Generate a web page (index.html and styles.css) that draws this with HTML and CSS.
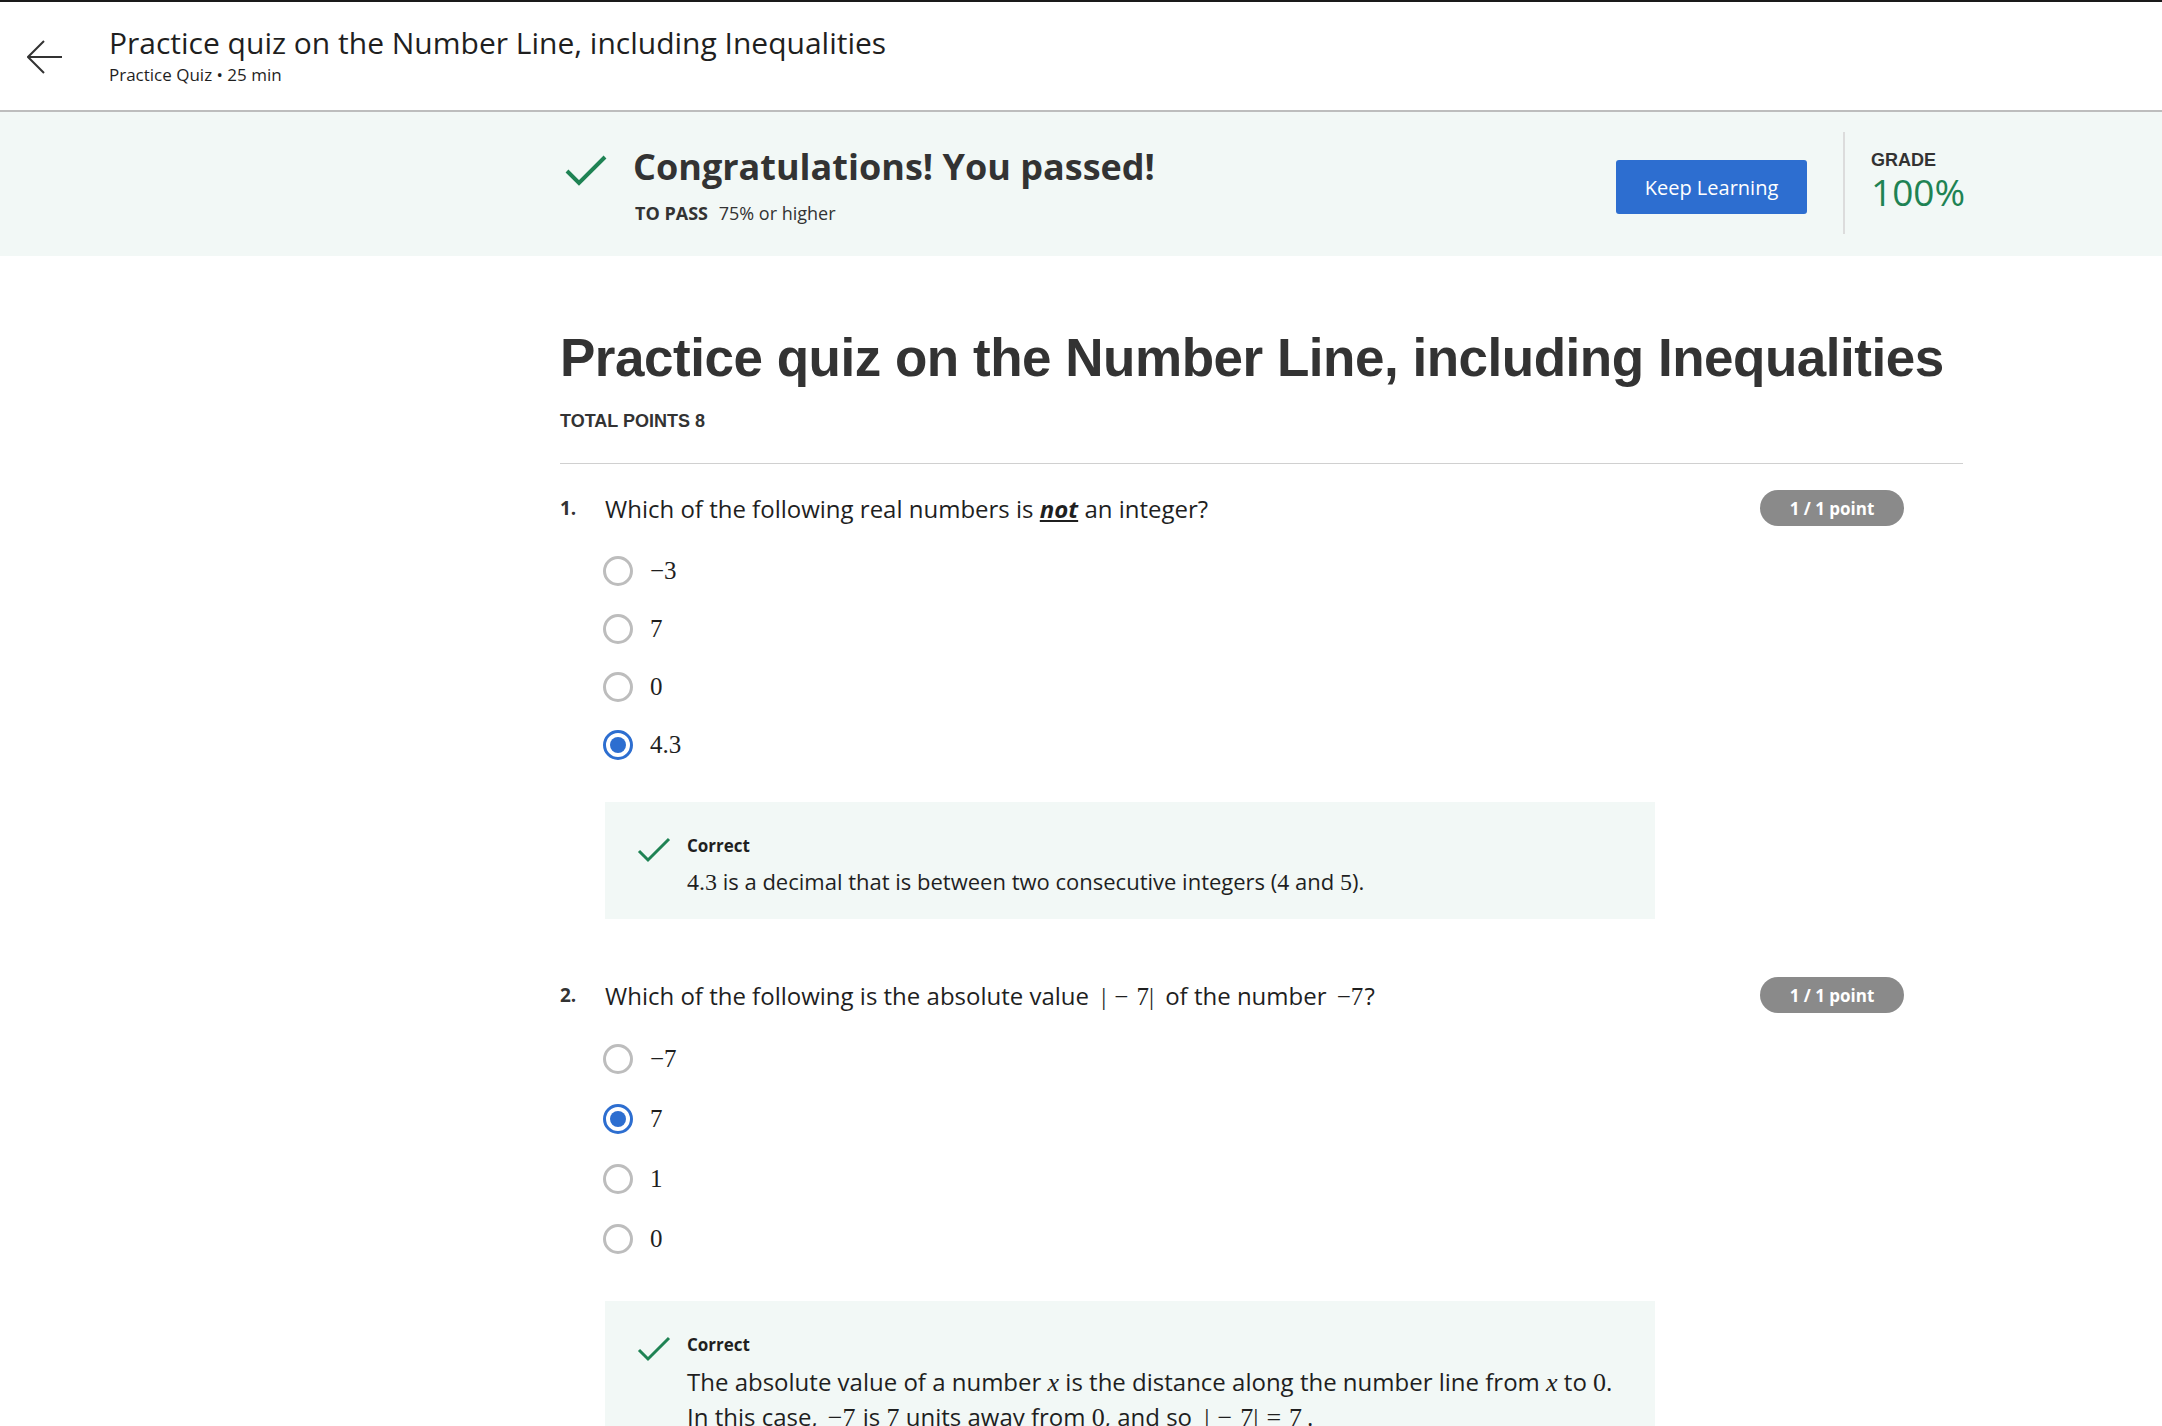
FILE: index.html
```html
<!DOCTYPE html>
<html lang="en">
<head>
<meta charset="utf-8">
<title>Practice quiz on the Number Line, including Inequalities</title>
<link rel="stylesheet" href="styles.css">
</head>
<body>
<header class="topbar">
  <div class="back">
    <svg width="36" height="34" viewBox="0 0 36 34"><path d="M35 17H2M17 1L1 17L17 33" fill="none" stroke="#333" stroke-width="2"/></svg>
  </div>
  <div class="top-titles">
    <div class="top-title">Practice quiz on the Number Line, including Inequalities</div>
    <div class="top-sub">Practice Quiz • 25 min</div>
  </div>
</header>

<section class="banner">
  <div class="banner-inner">
    <div class="pass-check">
      <svg width="42" height="32" viewBox="0 0 42 32"><path d="M2 16L14 28L40 2" fill="none" stroke="#1f8354" stroke-width="4"/></svg>
    </div>
    <div class="pass-text">
      <div class="pass-title">Congratulations! You passed!</div>
      <div class="pass-sub"><b>TO PASS</b> 75% or higher</div>
    </div>
    <button class="keep">Keep Learning</button>
    <div class="sep"></div>
    <div class="grade">
      <div class="grade-label">GRADE</div>
      <div class="grade-val">100%</div>
    </div>
  </div>
</section>

<main class="content">
  <h1 class="quiz-title">Practice quiz on the Number Line, including Inequalities</h1>
  <div class="total">TOTAL POINTS 8</div>
  <hr class="rule">

  <div class="question">
    <div class="q-head">
      <span class="q-num">1.</span>
      <span class="q-text">Which of the following real numbers is <em class="not">not</em> an integer?</span>
      <span class="pill">1 / 1 point</span>
    </div>
    <div class="options">
      <div class="opt"><span class="radio"></span><span class="math">−3</span></div>
      <div class="opt"><span class="radio"></span><span class="math">7</span></div>
      <div class="opt"><span class="radio"></span><span class="math">0</span></div>
      <div class="opt"><span class="radio on"></span><span class="math">4.3</span></div>
    </div>
    <div class="feedback">
      <svg class="fb-check" width="34" height="26" viewBox="0 0 34 26"><path d="M2 14L11 23L32 2" fill="none" stroke="#1f8354" stroke-width="3"/></svg>
      <div class="fb-body">
        <div class="fb-title">Correct</div>
        <div class="fb-text"><span class="math">4.3</span> is a decimal that is between two consecutive integers (<span class="math">4</span> and <span class="math">5</span>).</div>
      </div>
    </div>
  </div>

  <div class="question q2">
    <div class="q-head">
      <span class="q-num">2.</span>
      <span class="q-text">Which of the following is the absolute value <span class="math abs">|<span class="bin">−</span>7|</span> of the number <span class="math neg">−7</span>?</span>
      <span class="pill">1 / 1 point</span>
    </div>
    <div class="options wide">
      <div class="opt"><span class="radio"></span><span class="math">−7</span></div>
      <div class="opt"><span class="radio on"></span><span class="math">7</span></div>
      <div class="opt"><span class="radio"></span><span class="math">1</span></div>
      <div class="opt"><span class="radio"></span><span class="math">0</span></div>
    </div>
    <div class="feedback">
      <svg class="fb-check" width="34" height="26" viewBox="0 0 34 26"><path d="M2 14L11 23L32 2" fill="none" stroke="#1f8354" stroke-width="3"/></svg>
      <div class="fb-body">
        <div class="fb-title">Correct</div>
        <div class="fb-text big">The absolute value of a number <span class="math it">x</span> is the distance along the number line from <span class="math it">x</span> to <span class="math">0</span>.<br>In this case, <span class="math neg">−7</span> is <span class="math">7</span> units away from <span class="math">0</span>, and so <span class="math abs">|<span class="bin">−</span>7|<span class="bin">=</span>7</span>.</div>
      </div>
    </div>
  </div>
</main>
</body>
</html>
```

FILE: styles.css
```css
html, body {
  margin: 0;
  padding: 0;
  background: #fff;
  color: #1f1f1f;
  font-family: "Open Sans", "Liberation Sans", sans-serif;
}
body {
  border-top: 2px solid #1a1a1a;
  overflow: hidden;
}

.topbar {
  height: 110px;
  border-bottom: 2px solid #bdbdbd;
  display: flex;
  align-items: flex-start;
  box-sizing: border-box;
}
.back {
  margin-left: 27px;
  margin-top: 38px;
  width: 82px;
}
.back svg { display: block; }
.top-titles { padding-top: 21px; }
.top-title {
  font-size: 30px;
  line-height: 40px;
  color: #1f1f1f;
}
.top-sub {
  font-size: 17px;
  line-height: 24px;
  color: #1f1f1f;
}

.banner {
  background: #f2f8f6;
  height: 144px;
}
.banner-inner {
  margin-left: 565px;
  width: 1398px;
  display: flex;
  align-items: flex-start;
  height: 100%;
}
.pass-check {
  margin-top: 43px;
  width: 68px;
}
.pass-check svg { display: block; }
.pass-text {
  flex: 1;
  padding-top: 29px;
}
.pass-title {
  font-size: 36px;
  font-weight: 700;
  line-height: 52px;
  color: #333;
}
.pass-sub {
  font-size: 18px;
  line-height: 24px;
  margin-top: 8px;
  margin-left: 2px;
  color: #333;
}
.pass-sub b { margin-right: 6px; font-weight: 700; }
.keep {
  margin-top: 48px;
  width: 191px;
  height: 54px;
  background: #2d6ed0;
  border: none;
  border-radius: 3px;
  color: #fff;
  font-family: "Open Sans", sans-serif;
  font-size: 20px;
  padding: 0;
}
.sep {
  width: 2px;
  height: 102px;
  background: #dcdcdc;
  margin: 20px 26px 0 36px;
}
.grade { padding-top: 37px; width: 92px; }
.grade-label {
  font-family: "Liberation Sans", Arial, sans-serif;
  font-weight: 700;
  font-size: 18px;
  line-height: 22px;
  color: #333;
}
.grade-val {
  font-size: 37px;
  line-height: 42px;
  color: #1f8354;
}

.content {
  margin-left: 560px;
  width: 1403px;
  padding-top: 70px;
}
.quiz-title {
  font-family: "Liberation Sans", Arial, sans-serif;
  font-weight: 700;
  font-size: 53px;
  letter-spacing: -0.48px;
  line-height: 64px;
  white-space: nowrap;
  margin: 0;
  color: #333;
}
.total {
  font-family: "Liberation Sans", Arial, sans-serif;
  font-weight: 700;
  font-size: 18px;
  line-height: 22px;
  margin-top: 20px;
  color: #333;
}
.rule {
  border: none;
  border-top: 1px solid #d0d0d0;
  margin: 31px 0 0;
}

.question { padding-top: 26px; }
.q2 { padding-top: 58px; }
.q-head {
  display: flex;
  align-items: center;
  height: 36px;
}
.q-num {
  width: 45px;
  font-weight: 700;
  font-size: 19px;
  color: #333;
}
.q-text {
  flex: 1;
  font-size: 24px;
  color: #1f1f1f;
}
.not {
  font-weight: 700;
  text-decoration: underline;
}
.pill {
  margin-right: 59px;
  width: 144px;
  height: 36px;
  border-radius: 18px;
  background: #8a8a8a;
  color: #fff;
  font-weight: 700;
  font-size: 17px;
  display: flex;
  align-items: center;
  justify-content: center;
}

.math {
  font-family: "Liberation Serif", "Times New Roman", serif;
  font-size: 25px;
}
.it { font-style: italic; }
.abs { margin: 0 5px 0 6px; }
.bin { margin: 0 8px; }
.neg { margin: 0 1px 0 4px; }

.options {
  margin-left: 43px;
  padding-top: 30px;
  display: flex;
  flex-direction: column;
  gap: 28px;
}
.options.wide { gap: 30px; padding-top: 31px; }
.opt {
  display: flex;
  align-items: center;
  height: 30px;
  color: #1f1f1f;
}
.radio {
  width: 30px;
  height: 30px;
  box-sizing: border-box;
  border: 3px solid #bdbdbd;
  border-radius: 50%;
  margin-right: 17px;
  position: relative;
}
.radio.on { border-color: #2d6ed0; }
.radio.on::after {
  content: "";
  position: absolute;
  left: 4px;
  top: 4px;
  width: 16px;
  height: 16px;
  border-radius: 50%;
  background: #2d6ed0;
}

.feedback {
  margin-left: 45px;
  margin-top: 42px;
  width: 1050px;
  background: #f2f8f6;
  display: flex;
  align-items: flex-start;
  padding: 32px 0 20px 32px;
  box-sizing: border-box;
}
.q2 .feedback { margin-top: 47px; }
.fb-check { display: block; margin-top: 3px; margin-right: 16px; }
.fb-title {
  font-weight: 700;
  font-size: 17px;
  line-height: 24px;
  color: #1f1f1f;
}
.fb-text {
  font-size: 22px;
  line-height: 34px;
  margin-top: 6px;
  color: #1f1f1f;
}
.fb-text .math { font-size: 24px; }
.fb-text.big { font-size: 24px; margin-top: 8px; }
.fb-text.big .math { font-size: 26px; }
```
